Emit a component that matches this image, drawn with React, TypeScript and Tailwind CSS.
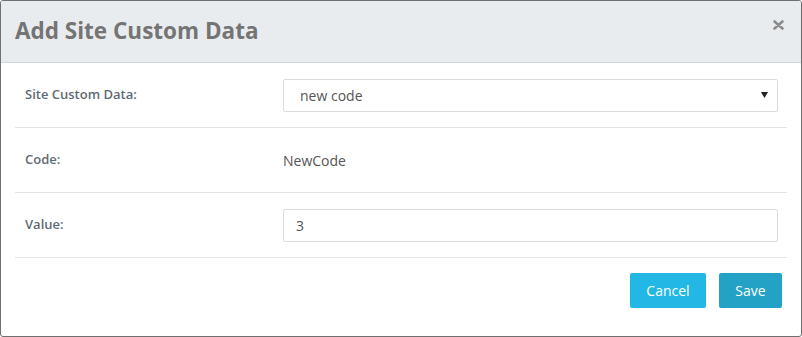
import type React from "react"

const Row: React.FC<{ label: string; children: React.ReactNode }> = ({ label, children }) => (
  <div className="mx-[14px] h-[65px] border-b border-[#e4e4e4] flex items-center">
    <div className="w-[268px] pl-[10px] text-[13px] font-semibold text-[#5f6b73]">{label}</div>
    {children}
  </div>
)

export default function App() {
  return (
    <div
      className="w-[802px] h-[337px] bg-white border border-[#6f6f6f] rounded-[3px] overflow-hidden flex flex-col"
      style={{ fontFamily: '"Open Sans", "Noto Sans", sans-serif' }}
    >
      {/* Header */}
      <div className="h-[62px] shrink-0 bg-[#e9ecef] border-b border-[#d3d6d9] flex items-center justify-between pl-[14px] pr-[17px]">
        <h2 className="text-[22.5px] font-bold text-[#747474] leading-none -mt-[1px]">Add Site Custom Data</h2>
        <button type="button" className="text-[#8a8a8a] -mt-[14px]">
          <svg width="11" height="10" viewBox="0 0 11 10">
            <path d="M1.5 1.5 L9.5 8.5 M9.5 1.5 L1.5 8.5" stroke="currentColor" strokeWidth="2.6" strokeLinecap="round" />
          </svg>
        </button>
      </div>

      {/* Body */}
      <Row label="Site Custom Data:">
        <div className="w-[495px] h-[33px] border border-[#dcdcdc] rounded-[2px] flex items-center justify-between pl-[16px] pr-[9px] text-[14px] text-[#555]">
          <span>new code</span>
          <svg width="7" height="6" viewBox="0 0 7 6">
            <path d="M0 0 H7 L3.5 6 Z" fill="#222" />
          </svg>
        </div>
      </Row>
      <Row label="Code:">
        <span className="text-[14px] text-[#555]">NewCode</span>
      </Row>
      <Row label="Value:">
        <div className="w-[495px] h-[33px] border border-[#dcdcdc] rounded-[2px] flex items-center pl-[12px] text-[14px] text-[#555]">
          3
        </div>
      </Row>

      {/* Footer */}
      <div className="flex justify-end gap-[13px] pt-[15px] pr-[19px]">
        <button type="button" className="w-[76px] h-[35px] rounded-[2px] bg-[#23b7e5] text-white text-[14px]">
          Cancel
        </button>
        <button type="button" className="w-[63px] h-[35px] rounded-[2px] bg-[#23a2c6] text-white text-[14px]">
          Save
        </button>
      </div>
    </div>
  )
}
